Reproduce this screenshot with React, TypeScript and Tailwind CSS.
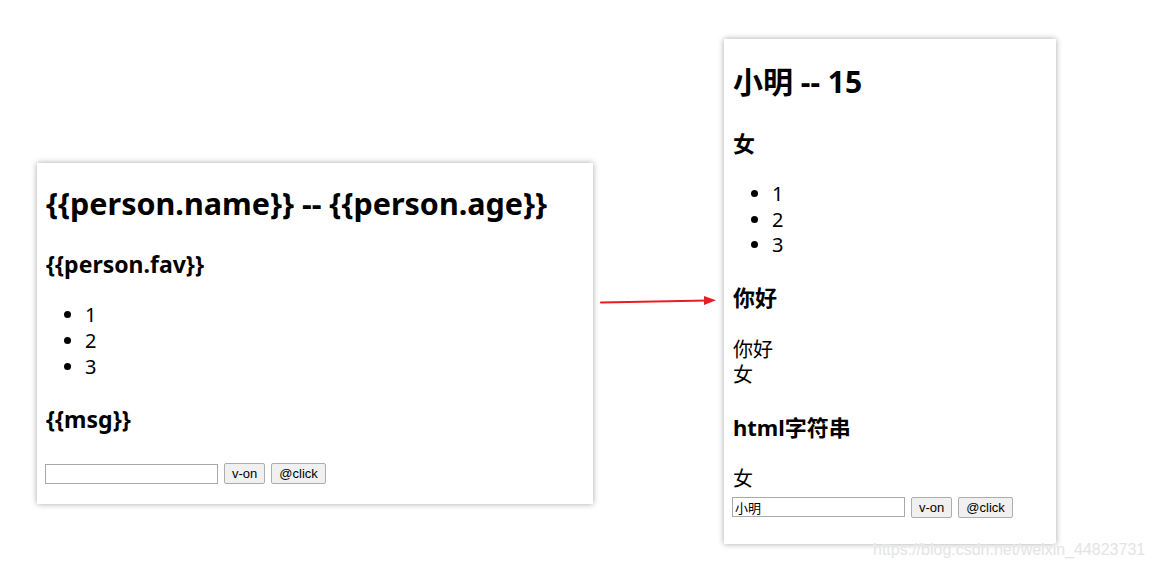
import React from "react";

const font = "font-['Noto_Sans','Noto_Sans_CJK_SC',sans-serif]";

function Controls({ value }: { value?: string }) {
  return (
    <div className="flex items-center gap-[6px] font-['Liberation_Sans',Arial,sans-serif] text-[13px]">
      <input
        readOnly
        value={value ?? ""}
        className="w-[173px] h-[20px] border border-[#a9a9a9] px-[2px] text-[13px] text-black outline-none font-['Noto_Sans_CJK_SC',sans-serif]"
      />
      <button className="h-[21px] px-[7px] border border-[#adadad] rounded-[2px] bg-[#f0f0f0] text-black leading-none">
        v-on
      </button>
      <button className="h-[21px] px-[7px] border border-[#adadad] rounded-[2px] bg-[#f0f0f0] text-black leading-none">
        @click
      </button>
    </div>
  );
}

function Bullets({ lead }: { lead: string }) {
  return (
    <ul className={`list-disc pl-[40px] text-[20px] ${lead}`}>
      <li>1</li>
      <li>2</li>
      <li>3</li>
    </ul>
  );
}

export default function App() {
  return (
    <div className={`relative w-[1155px] h-[569px] bg-white overflow-hidden flex items-start text-black ${font}`}>
      {/* template card */}
      <div className="ml-[37px] mt-[163px] w-[556px] bg-white shadow-[0_0_6px_rgba(0,0,0,0.35)] pl-[8px] pb-[20px]">
        <h1 className="mt-[21px] pl-[1px] text-[30.5px] leading-[38px] font-bold">
          {"{{person.name}} -- {{person.age}}"}
        </h1>
        <h3 className="mt-[27px] pl-[1px] text-[23px] leading-[30px] font-bold">{"{{person.fav}}"}</h3>
        <div className="mt-[23px]">
          <Bullets lead="leading-[26px]" />
        </div>
        <h3 className="mt-[24px] pl-[1px] text-[23px] leading-[30px] font-bold">{"{{msg}}"}</h3>
        <div className="mt-[29px]">
          <Controls />
        </div>
      </div>

      {/* rendered card */}
      <div className="ml-[131px] mt-[39px] w-[332px] bg-white shadow-[0_0_6px_rgba(0,0,0,0.35)] pl-[8px] pb-[26px]">
        <h1 className="mt-[24px] pl-[1px] text-[30px] leading-[38px] font-bold">小明 -- 15</h1>
        <h3 className="mt-[27px] pl-[1px] text-[22px] leading-[30px] font-bold">女</h3>
        <div className="mt-[23px]">
          <Bullets lead="leading-[25.5px]" />
        </div>
        <h3 className="mt-[24px] pl-[1px] text-[22px] leading-[30px] font-bold">你好</h3>
        <div className="mt-[25px] pl-[1px] text-[20px] leading-[25px]">
          <div>你好</div>
          <div>女</div>
        </div>
        <h3 className="mt-[25px] pl-[1px] text-[22px] leading-[30px] font-bold">html字符串</h3>
        <div className="mt-[24px] pl-[1px] text-[20px] leading-[25px]">女</div>
        <div className="mt-[6px]">
          <Controls value="小明" />
        </div>
      </div>

      {/* arrow */}
      <svg className="absolute left-[598px] top-[292px]" width="122" height="18" viewBox="0 0 122 18">
        <line x1="3" y1="10.5" x2="110" y2="8.5" stroke="#ec1c24" strokeWidth="2.2" strokeLinecap="round" />
        <polygon points="106,4 118,8.3 106,13" fill="#ec1c24" />
      </svg>

      {/* watermark */}
      <div className="absolute left-[873px] top-[539px] text-[16px] leading-[22px] text-[#e4e4e4] font-['Liberation_Sans',Arial,sans-serif] [text-shadow:0_0_2px_#fff]">
        https://blog.csdn.net/weixin_44823731
      </div>
    </div>
  );
}
